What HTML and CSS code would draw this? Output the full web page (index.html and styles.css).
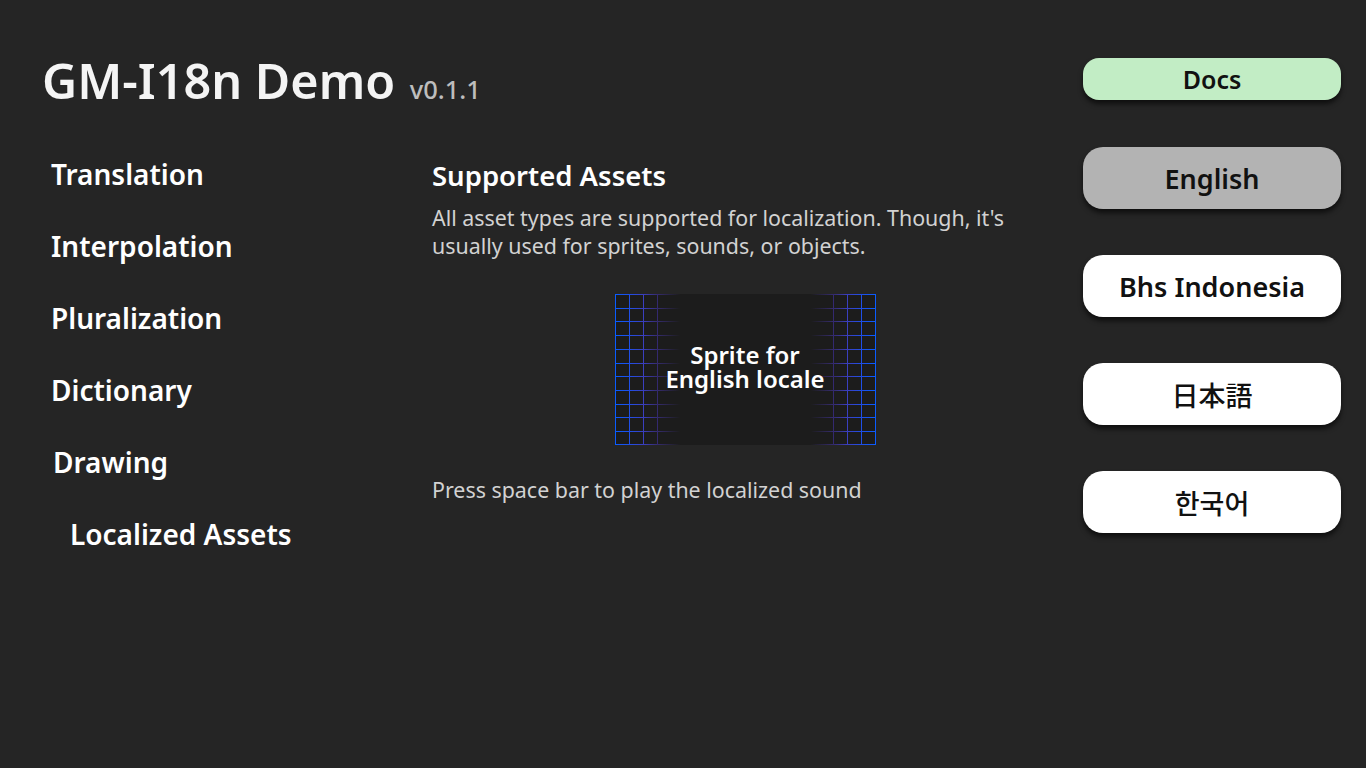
FILE: index.html
```html
<!DOCTYPE html>
<html lang="en">
<head>
    <meta charset="UTF-8">
    <title>GM-I18n Demo</title>
    <link rel="stylesheet" href="styles.css">
</head>
<body>
    <div class="page">
        <div class="left">
            <h1 class="title">GM-I18n Demo <span class="version">v0.1.1</span></h1>
            <nav class="menu">
                <div class="menu-item">Translation</div>
                <div class="menu-item">Interpolation</div>
                <div class="menu-item">Pluralization</div>
                <div class="menu-item">Dictionary</div>
                <div class="menu-item shift-1">Drawing</div>
                <div class="menu-item shift-2">Localized Assets</div>
            </nav>
        </div>

        <div class="content">
            <h2>Supported Assets</h2>
            <p class="desc">All asset types are supported for localization. Though, it's usually used for sprites, sounds, or objects.</p>

            <div class="sprite">
                <svg class="grid" width="261" height="151" viewBox="0 0 261 151">
                    <defs>
                        <linearGradient id="fade" x1="0" y1="0" x2="261" y2="0" gradientUnits="userSpaceOnUse">
                            <stop offset="0" stop-color="#0a5cff"/>
                            <stop offset="0.055" stop-color="#1f4fe8"/>
                            <stop offset="0.11" stop-color="#3a3fc0"/>
                            <stop offset="0.165" stop-color="#3a2f80" stop-opacity="0.8"/>
                            <stop offset="0.25" stop-color="#3a2f80" stop-opacity="0"/>
                            <stop offset="0.75" stop-color="#3a2f80" stop-opacity="0"/>
                            <stop offset="0.835" stop-color="#3a2f80" stop-opacity="0.8"/>
                            <stop offset="0.89" stop-color="#3a3fc0"/>
                            <stop offset="0.945" stop-color="#1f4fe8"/>
                            <stop offset="1" stop-color="#0a5cff"/>
                        </linearGradient>
                    </defs>
                    <rect x="0" y="0" width="261" height="151" fill="#1c1c1c"/>
                    <!-- rows -->
                    <g fill="url(#fade)">
                        <rect x="0" y="0" width="261" height="1"/>
                        <rect x="0" y="14" width="261" height="1"/>
                        <rect x="0" y="27" width="261" height="1"/>
                        <rect x="0" y="41" width="261" height="1"/>
                        <rect x="0" y="55" width="261" height="1"/>
                        <rect x="0" y="69" width="261" height="1"/>
                        <rect x="0" y="82" width="261" height="1"/>
                        <rect x="0" y="96" width="261" height="1"/>
                        <rect x="0" y="110" width="261" height="1"/>
                        <rect x="0" y="123" width="261" height="1"/>
                        <rect x="0" y="137" width="261" height="1"/>
                        <rect x="0" y="150" width="261" height="1"/>
                    </g>
                    <!-- columns -->
                    <rect x="0" y="0" width="1" height="151" fill="#0a5cff"/>
                    <rect x="14" y="0" width="1" height="151" fill="#1f4fe8"/>
                    <rect x="28" y="0" width="1" height="151" fill="#3a3fc0"/>
                    <rect x="42" y="0" width="1" height="151" fill="#33296f"/>
                    <rect x="218" y="0" width="1" height="151" fill="#33296f"/>
                    <rect x="232" y="0" width="1" height="151" fill="#3a3fc0"/>
                    <rect x="246" y="0" width="1" height="151" fill="#1f4fe8"/>
                    <rect x="260" y="0" width="1" height="151" fill="#0a5cff"/>
                </svg>
                <div class="sprite-label">Sprite for<br>English locale</div>
            </div>

            <p class="hint">Press space bar to play the localized sound</p>
        </div>

        <div class="side">
            <button class="btn docs">Docs</button>
            <div class="langs">
                <button class="btn lang active">English</button>
                <button class="btn lang">Bhs Indonesia</button>
                <button class="btn lang cjk" lang="ja">日本語</button>
                <button class="btn lang cjk" lang="ko">한국어</button>
            </div>
        </div>
    </div>
</body>
</html>
```

FILE: styles.css
```css
body {
    margin: 0;
    background-color: #252525;
    color: #FFFFFF;
    font-family: 'Noto Sans', 'Open Sans', sans-serif;
}

.page {
    display: flex;
    height: 768px;
    box-sizing: border-box;
    padding: 50px 25px 0 42px;
}

.left {
    width: 390px;
}

.title {
    margin: 0;
    font-size: 48.5px;
    font-weight: 600;
    line-height: 60px;
    color: #F4F4F4;
    white-space: nowrap;
}

.version {
    font-size: 25.5px;
    font-weight: 500;
    color: #BDBDBD;
    margin-left: 2px;
}

.menu {
    margin-top: 37px;
    padding-left: 9px;
}

.menu-item {
    font-size: 28px;
    font-weight: 600;
    line-height: 36px;
    height: 72px;
    color: #FFFFFF;
}

.shift-1 {
    padding-left: 2px;
}

.shift-2 {
    padding-left: 19px;
}

.content {
    width: 626px;
    padding-top: 106px;
}

.content h2 {
    margin: 0;
    font-size: 27.5px;
    font-weight: 600;
    line-height: 40px;
    color: #FFFFFF;
}

.desc {
    margin: 8px 0 0;
    font-size: 21.4px;
    line-height: 28px;
    color: #D2D2D2;
    width: 600px;
}

.sprite {
    position: relative;
    width: 261px;
    height: 151px;
    margin: 34px auto 0;
}

.grid {
    display: block;
}

.sprite-label {
    position: absolute;
    inset: 0 0 5px;
    display: flex;
    align-items: center;
    justify-content: center;
    text-align: center;
    font-size: 24px;
    font-weight: 600;
    line-height: 24px;
    color: #FFFFFF;
}

.hint {
    margin: 31px 0 0;
    font-size: 21.4px;
    line-height: 28px;
    color: #D2D2D2;
}

.side {
    margin-left: auto;
    width: 258px;
    padding-top: 8px;
}

.btn {
    display: block;
    width: 100%;
    border: none;
    font-family: 'Noto Sans', 'Noto Sans CJK JP', 'Noto Sans CJK KR', sans-serif;
    font-weight: 600;
    color: #111111;
    box-shadow: 0 4px 5px rgba(0, 0, 0, 0.6);
    padding: 0;
}

.docs {
    height: 42px;
    border-radius: 16px;
    background-color: #C2EDC5;
    font-size: 25px;
}

.langs {
    margin-top: 47px;
    display: flex;
    flex-direction: column;
    gap: 46px;
}

.lang {
    height: 62px;
    border-radius: 20px;
    background-color: #FFFFFF;
    font-size: 27px;
}

.lang.active {
    background-color: #B3B3B3;
}

.cjk {
    font-weight: 500;
    font-family: 'Noto Sans CJK JP', 'Noto Sans CJK KR', sans-serif;
}

.cjk:lang(ko) {
    font-family: 'Noto Sans CJK KR', sans-serif;
}
```
